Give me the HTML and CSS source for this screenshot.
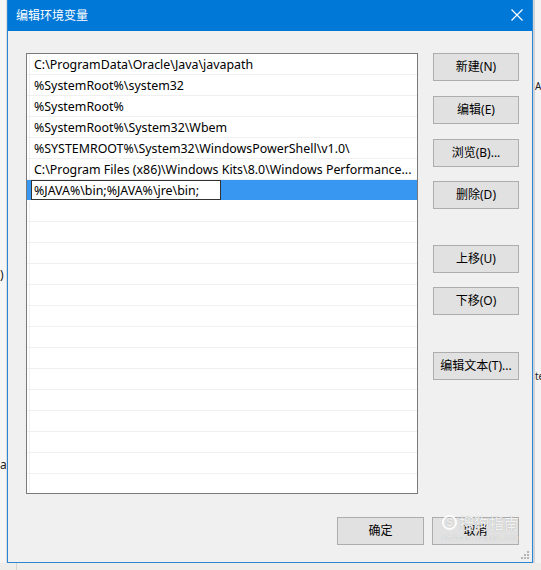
FILE: index.html
```html
<!DOCTYPE html>
<html lang="zh-CN">
<head>
<meta charset="utf-8">
<title>编辑环境变量</title>
<link rel="stylesheet" href="styles.css">
</head>
<body>
<div class="backdrop">
  <div class="bg-left"><span class="bg-a1">)</span><span class="bg-a2">a</span></div>
  <div class="dialog">
    <div class="titlebar">
      <span class="title">编辑环境变量</span>
      <svg class="close" width="12" height="12" viewBox="0 0 12 12"><path d="M0.5 0.5 L11.5 11.5 M11.5 0.5 L0.5 11.5" stroke="#fff" stroke-width="1.2" fill="none"/></svg>
    </div>
    <div class="content">
      <div class="main">
        <div class="listbox">
          <div class="row">C:\ProgramData\Oracle\Java\javapath</div>
          <div class="row">%SystemRoot%\system32</div>
          <div class="row">%SystemRoot%</div>
          <div class="row">%SystemRoot%\System32\Wbem</div>
          <div class="row">%SYSTEMROOT%\System32\WindowsPowerShell\v1.0\</div>
          <div class="row">C:\Program Files (x86)\Windows Kits\8.0\Windows Performance...</div>
          <div class="row selected"><span class="editbox">%JAVA%\bin;%JAVA%\jre\bin;</span></div>
          <div class="row"></div><div class="row"></div><div class="row"></div><div class="row"></div>
          <div class="row"></div><div class="row"></div><div class="row"></div><div class="row"></div>
          <div class="row"></div><div class="row"></div><div class="row"></div><div class="row"></div>
          <div class="row"></div><div class="row"></div>
        </div>
        <div class="side">
          <button class="btn">新建(N)</button>
          <button class="btn m15">编辑(E)</button>
          <button class="btn m15">浏览(B)...</button>
          <button class="btn m14">删除(D)</button>
          <button class="btn m36">上移(U)</button>
          <button class="btn m14">下移(O)</button>
          <button class="btn m37">编辑文本(T)...</button>
        </div>
      </div>
      <div class="footer">
        <button class="btn wide">确定</button>
        <button class="btn wide">取消</button>
      </div>
    </div>
    <svg class="grip" width="9" height="9" viewBox="0 0 9 9" fill="#b5b5b5"><rect x="6" y="0" width="2" height="2"/><rect x="3" y="3" width="2" height="2"/><rect x="6" y="3" width="2" height="2"/><rect x="0" y="6" width="2" height="2"/><rect x="3" y="6" width="2" height="2"/><rect x="6" y="6" width="2" height="2"/></svg>
    <div class="watermark">
      <div class="wm-top"><span class="wm-logo">S</span><span class="wm-name">搜狗指南</span></div>
      <div class="wm-url">zhinan.sogou.com</div>
    </div>
  </div>
  <div class="bg-right"><span class="bg-ap">Ap</span><span class="bg-te">te</span></div>
</div>
</body>
</html>
```
FILE: styles.css
```css
* { box-sizing: border-box; }
html, body { margin: 0; padding: 0; }
body {
  width: 541px;
  height: 570px;
  overflow: hidden;
  background: #ebe9e6;
  font-family: "Noto Sans", "Noto Sans CJK SC", sans-serif;
  font-size: 12px;
  color: #000;
}
.backdrop {
  display: flex;
  align-items: flex-start;
  height: 570px;
  background: linear-gradient(#d6d4d1, #d6d4d1) 16px 563px / 1px 7px no-repeat, #efedea;
}
.bg-left {
  width: 7px;
  height: 563px;
  background: #f6f6f6;
  position: relative;
  overflow: hidden;
  border-right: 1px solid #dcdcdc;
}
.bg-a1 { position: absolute; left: 0; top: 266px; font-size: 12px; color: #222; }
.bg-a2 { position: absolute; left: 0; top: 456px; font-size: 12px; color: #222; }
.bg-right {
  flex: 1;
  height: 563px;
  position: relative;
  overflow: hidden;
  background: #f3f3f3;
  border-left: 2px solid #cfd3d8;
}
.bg-ap { position: absolute; left: 0; top: 79px; font-size: 10px; color: #222; }
.bg-te { position: absolute; left: 0; top: 369px; font-size: 10px; color: #222; }

.dialog {
  position: relative;
  width: 526px;
  height: 563px;
  background: #f0f0f0;
  border: 1px solid #2b86d4;
  border-top: none;
  display: flex;
  flex-direction: column;
}
.titlebar {
  height: 31px;
  background: #0078d7;
  color: #fff;
  display: flex;
  align-items: center;
  justify-content: space-between;
  padding: 0 9px 0 8px;
  flex-shrink: 0;
}
.title { font-family: "Noto Sans CJK SC", sans-serif; font-size: 12px; line-height: 1; margin-top: -1px; }
.close { margin-top: -1px; }

.content {
  padding: 22px 13px 0 18px;
  display: flex;
  flex-direction: column;
}
.main { display: flex; align-items: flex-start; }
.listbox {
  width: 392px;
  height: 441px;
  border: 1px solid #7a7a7a;
  overflow: hidden;
  flex-shrink: 0;
  background: linear-gradient(#f0f0f0, #f0f0f0) 2px 0 / 1px 100% no-repeat, #fff;
}
.row {
  height: 21px;
  border-bottom: 1px solid #f0f0f0;
  padding-left: 7px;
  padding-top: 1px;
  line-height: 19px;
  font-size: 12.4px;
  white-space: nowrap;
  overflow: hidden;
}
.row.selected {
  background: #3897f0;
  padding-left: 4px;
  padding-top: 0;
  border-bottom-color: #fff;
}
.editbox {
  display: inline-block;
  width: 190px;
  height: 20px;
  background: #fff;
  border: 1px solid #333;
  padding-left: 2px;
  padding-top: 1px;
  line-height: 17px;
  vertical-align: top;
}
.side {
  display: flex;
  flex-direction: column;
  margin-left: 15px;
}
.btn {
  width: 86px;
  height: 28px;
  background: #e1e1e1;
  border: 1px solid #adadad;
  font-family: "Noto Sans", "Noto Sans CJK SC", sans-serif;
  font-size: 12px;
  color: #000;
  padding: 0;
  margin: 0;
  line-height: 26px;
  text-align: center;
}
.m14 { margin-top: 14px; }
.m15 { margin-top: 15px; }
.m36 { margin-top: 36px; }
.m37 { margin-top: 37px; }
.footer {
  display: flex;
  justify-content: flex-end;
  gap: 8px;
  margin-top: 23px;
}
.wide { width: 87px; }
.grip { position: absolute; right: 2px; bottom: 2px; }
.watermark {
  position: absolute;
  left: 433px;
  top: 514px;
  width: 90px;
  color: rgba(255,255,255,0.85);
  text-shadow: 0 0 1px rgba(120,120,120,0.6);
  pointer-events: none;
}
.wm-top { display: flex; align-items: center; gap: 2px; padding-left: 1px; }
.wm-logo {
  width: 15px; height: 15px;
  border: 2px solid rgba(255,255,255,0.85);
  border-radius: 50%;
  font-size: 10px; font-weight: bold;
  line-height: 11px; text-align: center;
  font-family: "Liberation Sans", sans-serif;
}
.wm-name { font-family: "Noto Sans CJK SC", sans-serif; font-size: 15px; line-height: 17px; }
.wm-url { font-family: "DejaVu Sans Mono", monospace; font-size: 7px; letter-spacing: 0.6px; margin-top: 3px; padding-left: 1px; }
```
